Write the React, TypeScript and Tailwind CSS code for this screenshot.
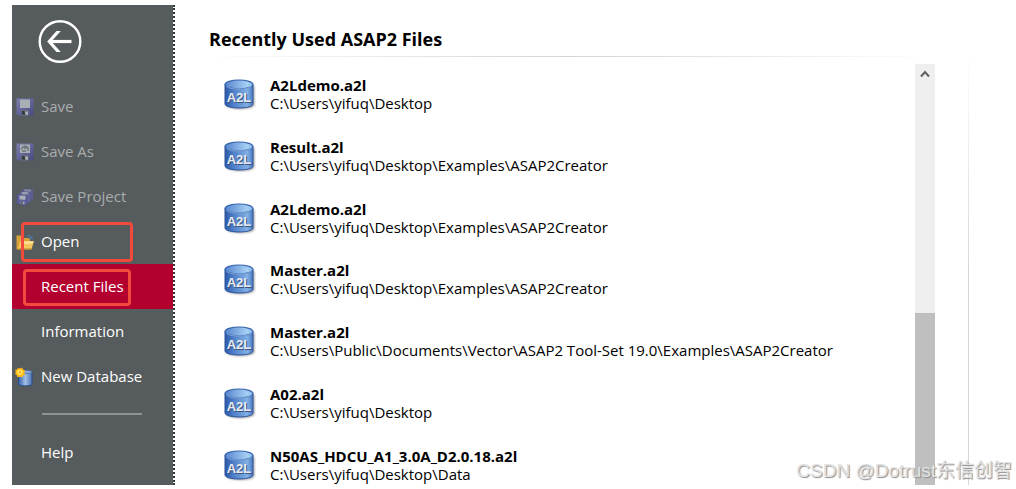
import type { ReactNode } from "react";
import clsx from "clsx";

type RecentFile = { name: string; path: string };

const recentFiles: RecentFile[] = [
    { name: "A2Ldemo.a2l", path: "C:\\Users\\yifuq\\Desktop" },
    { name: "Result.a2l", path: "C:\\Users\\yifuq\\Desktop\\Examples\\ASAP2Creator" },
    { name: "A2Ldemo.a2l", path: "C:\\Users\\yifuq\\Desktop\\Examples\\ASAP2Creator" },
    { name: "Master.a2l", path: "C:\\Users\\yifuq\\Desktop\\Examples\\ASAP2Creator" },
    { name: "Master.a2l", path: "C:\\Users\\Public\\Documents\\Vector\\ASAP2 Tool-Set 19.0\\Examples\\ASAP2Creator" },
    { name: "A02.a2l", path: "C:\\Users\\yifuq\\Desktop" },
    { name: "N50AS_HDCU_A1_3.0A_D2.0.18.a2l", path: "C:\\Users\\yifuq\\Desktop\\Data" },
];

function SaveIcon({ pencil = false }: { pencil?: boolean }) {
    return (
        <svg viewBox="0 0 18 18" className="size-[18px]" aria-hidden="true">
            <defs>
                <linearGradient id="disk" x1="0" y1="0" x2="1" y2="1">
                    <stop offset="0" stopColor="#7c7fb4" />
                    <stop offset="1" stopColor="#484b80" />
                </linearGradient>
            </defs>
            <path d="M.5.5h17v17H2L.5 16z" fill="url(#disk)" />
            <path d="M4 1.500h10v8.500H4z" fill="#a9afb3" />
            {pencil && <path d="M5 6.500c2-4 5-4 7-2M8 5l4 0v3M6 8h4" fill="none" stroke="#697277" strokeWidth="1.300" />}
            <path d="M5.500 12h7v5.500h-7z" fill="#686c78" />
            <path d="M6 13h3v3.500H6z" fill="#34383f" />
            <path d="M8.500 13.500H12V17h-2z" fill="#a7adb0" />
        </svg>
    );
}

function SaveProjectIcon() {
    return (
        <svg viewBox="0 0 18 18" className="size-[18px]" aria-hidden="true">
            <path d="M7 1l10 .5v9L14 14 7 11z" fill="#5b5e94" />
            <path d="M8 1.500h7l-.5 3H8z" fill="#858aa2" />
            <path d="M4 3.500l10 .5v9l-2 2-8-2z" fill="#686ba2" stroke="#505379" strokeWidth=".6" />
            <path d="M6 4h6l-.5 3H6z" fill="#959bad" />
            <path d="M1 6.500l10.500.5v8.500L9 17.500l-8-2z" fill="#5d609d" stroke="#4b4e79" strokeWidth=".6" />
            <path d="M3.500 7.500l6 .3-.3 4.200-5.700-.8z" fill="#a9afb7" />
            <path d="M4.500 13l4 .8v2.700l-4-1z" fill="#9ca2aa" />
            <path d="M5 13.500l1.500.3v1.700L5 15.200z" fill="#34383f" />
        </svg>
    );
}

function OpenIcon() {
    return (
        <svg viewBox="0 0 18 18" className="size-[18px]" aria-hidden="true">
            <path d="M.5 2.500h5L7 5h7v4H5L2 16.500.5 16z" fill="#d7a33a" />
            <path d="M9 4c2-3 5-3 6.500-.5l1.300-.8-.3 4.300-4-1.500 1.300-.8C12.800 3 11 3 9 4z" fill="#4c718e" />
            <path d="M4.500 8H18l-2.500 8.500H1.500z" fill="#f2c75d" />
            <path d="M5 8.500h12l-.7 2.300H4.300z" fill="#ffe29a" />
            <path d="M1.500 16.500h14l.3-1H2z" fill="#b88423" />
        </svg>
    );
}

function NewDatabaseIcon() {
    return (
        <svg viewBox="0 0 18 20" className="-ml-px h-5 w-[18px]" aria-hidden="true">
            <defs>
                <linearGradient id="newdb" x1="0" x2="1">
                    <stop offset="0" stopColor="#315fa9" />
                    <stop offset=".5" stopColor="#a3c0e5" />
                    <stop offset="1" stopColor="#4c75b7" />
                </linearGradient>
            </defs>
            <path d="M3.500 5.500V17c0 2.500 13.500 2.500 13.500 0V5.500z" fill="url(#newdb)" stroke="#294c8d" />
            <ellipse cx="10.500" cy="5" rx="6.500" ry="1.700" fill="#88aadb" stroke="#40669f" strokeWidth=".7" />
            <path d="M3 1l2 .5L7 .5 8 2.500l2 1-.7 2L10 8 8 8.500 7 10.500 5 9.700l-2.500.5L1.800 8 0 7l.8-2L.2 2.700 2 2.500z" fill="#ffbd16" />
            <circle cx="5" cy="5.300" r="2.500" fill="#ffe46c" />
            <circle cx="5" cy="5.300" r="1" fill="#f4a000" />
        </svg>
    );
}

function A2lIcon() {
    return (
        <svg viewBox="0 0 34 34" className="size-[34px] shrink-0" aria-hidden="true">
            <defs>
                <linearGradient id="a2l-body" x1="0" x2="1">
                    <stop offset="0" stopColor="#2a58a8" />
                    <stop offset=".3" stopColor="#4f7fc8" />
                    <stop offset=".8" stopColor="#80b0e4" />
                    <stop offset="1" stopColor="#4a78c0" />
                </linearGradient>
                <linearGradient id="a2l-top" x1="0" x2="1">
                    <stop offset="0" stopColor="#5685ce" />
                    <stop offset=".8" stopColor="#a6d0f4" />
                    <stop offset="1" stopColor="#86b4e6" />
                </linearGradient>
                <filter id="a2l-shadow" x="-20%" y="-20%" width="140%" height="150%">
                    <feGaussianBlur stdDeviation="1" />
                </filter>
            </defs>
            <path d="M4.500 9v19c0 5.500 28 5.500 28 0V9z" fill="#000" opacity=".35" filter="url(#a2l-shadow)" />
            <path d="M3 7.500v19.500c0 5.300 28 5.300 28 0V7.500z" fill="url(#a2l-body)" stroke="#2f559c" />
            <ellipse cx="17" cy="7.500" rx="14" ry="4.500" fill="url(#a2l-top)" stroke="#3462ac" strokeWidth="1.200" />
            <path d="M4.500 9.500c4 3.500 21 3.500 25 0" fill="none" stroke="#b4d2f2" strokeWidth=".6" />
            <text x="18" y="26" textAnchor="middle" fill="#39537f" fontFamily="Liberation Sans, sans-serif" fontWeight="bold" fontSize="13">A2L</text>
            <text x="17" y="25" textAnchor="middle" fill="#e8ebf1" fontFamily="Liberation Sans, sans-serif" fontWeight="bold" fontSize="13">A2L</text>
        </svg>
    );
}

type MenuItemProps = {
    label: string;
    icon?: ReactNode;
    disabled?: boolean;
    active?: boolean;
    children?: ReactNode;
};

function MenuItem({ label, icon, disabled, active, children }: MenuItemProps) {
    return (
        <button
            type="button"
            disabled={disabled}
            aria-current={active ? "page" : undefined}
            className={clsx(
                "relative flex h-[45px] w-full items-center pl-1 text-left",
                disabled ? "text-[#a9adae]" : "text-white",
                active && "bg-[#b4002f]"
            )}
        >
            <span className="flex w-[25px] items-center">{icon}</span>
            {label}
            {children}
        </button>
    );
}

function Sidebar() {
    return (
        <nav className="w-[163px] shrink-0 border-r-2 border-dotted border-[#303536] bg-[#565b5d] bg-clip-padding text-[15px]">
            <div className="flex h-[79px] items-start pt-[15px] pl-[26px]">
                <button type="button" aria-label="Back">
                    <svg viewBox="0 0 44 44" className="size-11" fill="none" stroke="#fff">
                        <circle cx="22" cy="21.500" r="20.300" strokeWidth="2.400" />
                        <path d="M11 21.500h22.500" strokeWidth="3.200" />
                        <path d="M18.500 11h4.300l-9.500 10.500L22.800 32h-4.300L9.200 21.500z" fill="#fff" stroke="none" />
                    </svg>
                </button>
            </div>
            <MenuItem label="Save" icon={<SaveIcon />} disabled />
            <MenuItem label="Save As" icon={<SaveIcon pencil />} disabled />
            <MenuItem label="Save Project" icon={<SaveProjectIcon />} disabled />
            <MenuItem label="Open" icon={<OpenIcon />}>
                <span className="absolute top-[3px] left-[9px] h-10 w-[112px] rounded border-[3px] border-[#f24a3d]" />
            </MenuItem>
            <MenuItem label="Recent Files" active>
                <span className="absolute top-[5px] left-[11px] h-[37px] w-[108px] rounded border-[3px] border-[#f24a3d]" />
            </MenuItem>
            <MenuItem label="Information" />
            <MenuItem label="New Database" icon={<NewDatabaseIcon />} />
            <hr className="mt-[14px] mr-[31px] mb-[15px] ml-[30px] border-t-2 border-[#8e9294]" />
            <MenuItem label="Help" />
        </nav>
    );
}

function Scrollbar() {
    return (
        <div className="flex w-5 shrink-0 flex-col bg-[#efefef]">
            <button type="button" aria-label="Scroll up" className="flex h-5 items-center justify-center">
                <svg viewBox="0 0 10 8" className="h-2 w-[10px]" fill="none" stroke="#606060" strokeWidth="2">
                    <path d="M1 6.500L5 2l4 4.500" />
                </svg>
            </button>
            <div className="basis-[229px]" />
            <div className="flex-1 bg-[#bfbfbf]" />
        </div>
    );
}

export default function App() {
    return (
        <div className="relative flex min-h-screen bg-white py-1 pt-[5px] pl-3 font-['Open_Sans','Noto_Sans',sans-serif] text-black">
            <Sidebar />
            <main className="flex min-w-0 flex-1 flex-col pl-[26px]">
                <h1 className="pt-[22px] pl-2 text-lg leading-6 font-bold">Recently Used ASAP2 Files</h1>
                <div className="mr-20 mt-[5px] h-px bg-linear-to-r from-white via-[#d4d4d4] to-white" />
                <div className="mt-[7px] mr-[81px] flex flex-1">
                    <ul className="flex flex-1 flex-col justify-between pt-3 pb-[2px] pl-[21px]">
                        {recentFiles.map((file, index) => (
                            <li key={index}>
                                <a href="#" className="flex items-center gap-[14px] text-[15px] leading-[18px]">
                                    <A2lIcon />
                                    <span>
                                        <span className="block font-bold">{file.name}</span>
                                        <span className="block">{file.path}</span>
                                    </span>
                                </a>
                            </li>
                        ))}
                    </ul>
                    <Scrollbar />
                </div>
            </main>
            <div className="mt-11 -ml-12 mr-[47px] w-px bg-linear-to-b from-white to-[#d8d8d8] to-50%" />
            <p className="absolute right-1 bottom-1 font-['Liberation_Sans','Noto_Sans_CJK_SC',sans-serif] text-[19px] leading-7 text-[#e2e2e2] [text-shadow:1px_1px_1px_#8a8a8a]">
                CSDN @Dotrust东信创智
            </p>
        </div>
    );
}
